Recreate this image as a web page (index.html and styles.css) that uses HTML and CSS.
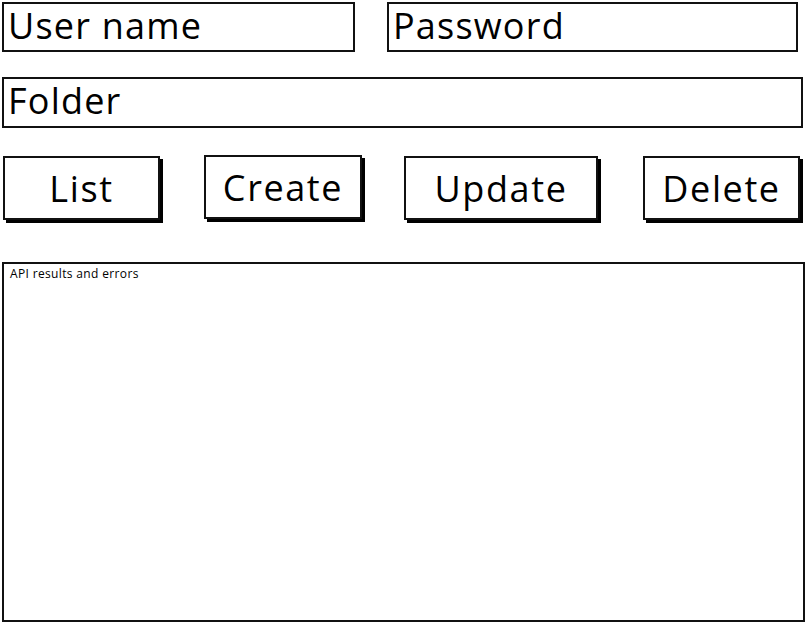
FILE: index.html
```html
<!DOCTYPE html>
<html>
<head>
<meta charset="utf-8">
<link rel="stylesheet" href="styles.css">
</head>
<body>
<div class="page">
  <div class="row row-creds">
    <div class="field field-user">User name</div>
    <div class="field field-pass">Password</div>
  </div>
  <div class="row row-folder">
    <div class="field field-folder">Folder</div>
  </div>
  <div class="row row-buttons">
    <div class="btn btn-list">List</div>
    <div class="btn btn-create">Create</div>
    <div class="btn btn-update">Update</div>
    <div class="btn btn-delete">Delete</div>
  </div>
  <div class="results">API results and errors</div>
</div>
</body>
</html>
```

FILE: styles.css
```css
html, body {
  margin: 0;
  padding: 0;
  background: #fff;
}
.page {
  width: 807px;
  height: 625px;
  box-sizing: border-box;
  padding: 2px 0 0 2px;
  display: flex;
  flex-direction: column;
  font-family: "Open Sans", "DejaVu Sans", sans-serif;
  color: #000;
}
.row {
  display: flex;
}
.field {
  box-sizing: border-box;
  height: 50px;
  border: 2px solid #111;
  font-size: 36px;
  letter-spacing: 1.2px;
  line-height: 44px;
  padding-left: 4px;
  background: #fff;
}
.field-user { width: 353px; }
.field-pass { width: 411px; margin-left: 32px; }
.row-folder { margin-top: 25px; }
.field-folder { width: 801px; height: 51px; }
.row-buttons {
  margin-top: 28px;
  padding-left: 1px;
}
.btn {
  box-sizing: border-box;
  height: 64px;
  border: 2px solid #111;
  box-shadow: 3px 3px 0 #000;
  display: flex;
  align-items: center;
  justify-content: center;
  font-size: 36px;
  letter-spacing: 1.6px;
  background: #fff;
}
.btn-list { width: 157px; }
.btn-create { width: 158px; margin-left: 44px; margin-top: -1px; }
.btn-update { width: 194px; margin-left: 42px; }
.btn-delete { width: 157px; margin-left: 45px; }
.results {
  box-sizing: border-box;
  margin-top: 42px;
  width: 803px;
  height: 360px;
  border: 2px solid #111;
  font-size: 12px;
  letter-spacing: 0.35px;
  line-height: 16px;
  padding: 2px 0 0 6px;
}
```
